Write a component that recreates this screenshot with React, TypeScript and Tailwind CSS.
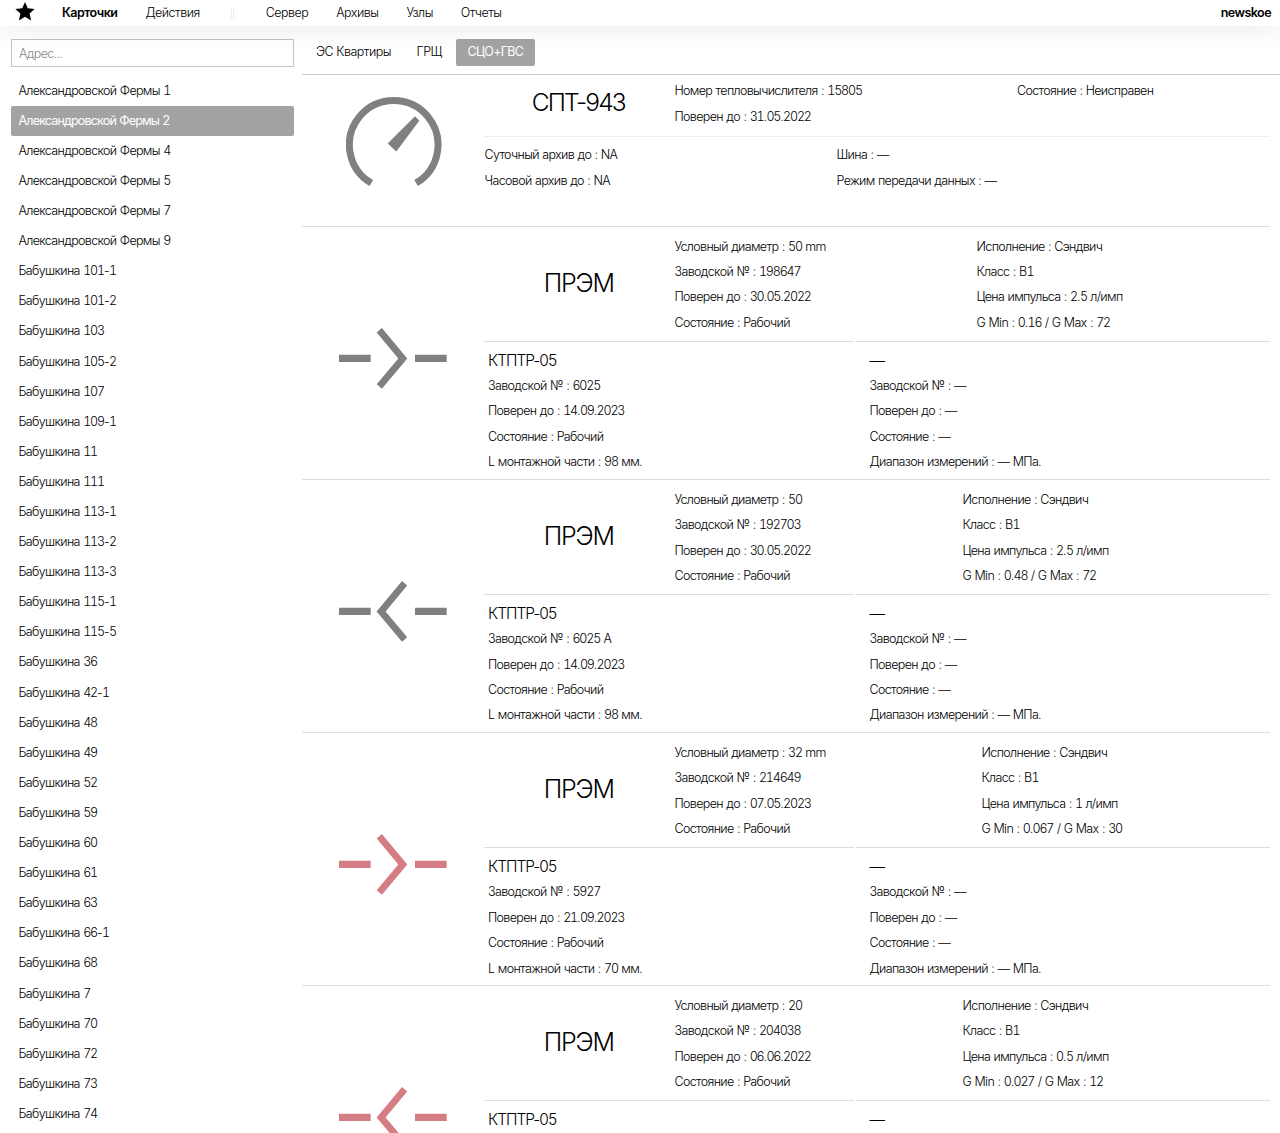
import { useState } from "react";
import clsx from "clsx";

const NAV_MAIN = ["Карточки", "Действия"];
const NAV_EXTRA = ["Сервер", "Архивы", "Узлы", "Отчеты"];
const TABS = ["ЭС Квартиры", "ГРЩ", "СЦО+ГВС"];

const ADDRESSES = [
  ...["1", "2", "4", "5", "7", "9"].map((n) => `Александровской Фермы ${n}`),
  ...[
    "101-1", "101-2", "103", "105-2", "107", "109-1", "11", "111", "113-1", "113-2",
    "113-3", "115-1", "115-5", "36", "42-1", "48", "49", "52", "59", "60", "61", "63",
    "66-1", "68", "7", "70", "72", "73", "74",
  ].map((n) => `Бабушкина ${n}`),
];

type Meter = {
  diameter: string;
  serial: string;
  verified: string;
  impulse: string;
  range: string;
  col: string;
  color: string;
  reverse: boolean;
  sensor?: { serial: string; verified: string; length: string };
};

const METERS: Meter[] = [
  {
    diameter: "50 mm", serial: "198647", verified: "30.05.2022", impulse: "2.5 л/имп",
    range: "G Min : 0.16 / G Max : 72", col: "w-[302px]", color: "text-[#808080]", reverse: false,
    sensor: { serial: "6025", verified: "14.09.2023", length: "98 мм." },
  },
  {
    diameter: "50", serial: "192703", verified: "30.05.2022", impulse: "2.5 л/имп",
    range: "G Min : 0.48 / G Max : 72", col: "w-[288px]", color: "text-[#808080]", reverse: true,
    sensor: { serial: "6025 A", verified: "14.09.2023", length: "98 мм." },
  },
  {
    diameter: "32 mm", serial: "214649", verified: "07.05.2023", impulse: "1 л/имп",
    range: "G Min : 0.067 / G Max : 30", col: "w-[307px]", color: "text-[#d57d84]", reverse: false,
    sensor: { serial: "5927", verified: "21.09.2023", length: "70 мм." },
  },
  {
    diameter: "20", serial: "204038", verified: "06.06.2022", impulse: "0.5 л/имп",
    range: "G Min : 0.027 / G Max : 12", col: "w-[288px]", color: "text-[#d57d84]", reverse: true,
  },
];

// Digits get equal widths, the rest of the text stays proportional
function Label({ text }: { text: string }) {
  return text.split(/(\d+)/).map((part, i) =>
    i % 2 ? <span key={i} className="tracking-[-0.094em] tabular-nums">{part}</span> : part
  );
}

function Star() {
  return (
    <svg className="h-[19px] w-[20px]" viewBox="0 0 20 19" fill="currentColor">
      <path d="M10 0 12.8 6.3 19.7 7 14.6 11.6 16.1 18.4 10 14.8 3.9 18.4 5.4 11.6.3 7 7.2 6.3Z" />
    </svg>
  );
}

function Gauge() {
  return (
    <svg className="h-[90px] w-[96px] text-[#808080]" viewBox="0 0 96 90">
      <path d="M25.3 86.1A44.3 44.3 0 1 1 70.1 86.1" fill="none" stroke="currentColor" strokeWidth="7" />
      <path d="M69 19.2 73.3 23.8 50.3 54.5 41.7 46.5Z" fill="currentColor" />
    </svg>
  );
}

function Flow({ reverse, color }: { reverse: boolean; color: string }) {
  return (
    <svg className={clsx("h-[62px] w-[108px]", color)} viewBox="0 0 108 62" fill="currentColor">
      <path d="M0 26.7H31.7V34.1H0ZM76 26.7H107.7V34.1H76Z" />
      <path
        d={reverse
          ? "M63 .1 37.6 30.4 63 60.7 68.2 56.2 46.6 30.4 68.2 4.6Z"
          : "M42.9.1 68.3 30.4 42.9 60.7 37.7 56.2 59.3 30.4 37.7 4.6Z"}
      />
    </svg>
  );
}

function Lines({ items, className }: { items: string[]; className?: string }) {
  return (
    <div className={clsx("shrink-0", className)}>
      {items.map((t) => (
        <p key={t} className="h-[25.45px] leading-[25.45px] whitespace-nowrap"><Label text={t} /></p>
      ))}
    </div>
  );
}

function Calculator() {
  return (
    <section className="mr-[10px] flex h-[152px] shrink-0 border-b border-[#dedede]">
      <div className="w-[182px] shrink-0 pt-[22.4px] pl-[44px]">
        <Gauge />
      </div>
      <div className="flex-1">
        <div className="flex h-[61.5px] border-b border-[#eeeeee] pt-[3.2px]">
          <h2 className="w-[188.5px] shrink-0 pt-[4.5px] text-center text-[24.5px] leading-[38px] tracking-[-0.075em]">СПТ-943</h2>
          <Lines className="ml-[2px] w-[342.5px]" items={["Номер тепловычислителя : 15805", "Поверен до : 31.05.2022"]} />
          <Lines items={["Состояние : Неисправен"]} />
        </div>
        <div className="flex pt-[5.7px] pl-[0.5px]">
          <Lines className="w-[352px]" items={["Суточный архив до : NA", "Часовой архив до : NA"]} />
          <Lines items={["Шина : —", "Режим передачи данных : —"]} />
        </div>
      </div>
    </section>
  );
}

function MeterCard({ meter }: { meter: Meter }) {
  const { sensor } = meter;
  return (
    <section className={clsx("mr-[10px] flex shrink-0", sensor && "h-[253.15px] border-b border-[#dedede]")}>
      <div className="w-[182px] shrink-0 pt-[101px] pl-[37px]">
        <Flow reverse={meter.reverse} color={meter.color} />
      </div>
      <div className="flex-1">
        <div className="flex h-[114px] pt-[6.6px]">
          <h2 className="w-[189.5px] shrink-0 pt-[30.4px] text-center text-[25px] leading-[38px] tracking-[-0.05em]">ПРЭМ</h2>
          <Lines
            className={clsx("ml-px", meter.col)}
            items={[
              `Условный диаметр : ${meter.diameter}`,
              `Заводской № : ${meter.serial}`,
              `Поверен до : ${meter.verified}`,
              "Состояние : Рабочий",
            ]}
          />
          <Lines items={["Исполнение : Сэндвич", "Класс : B1", `Цена импульса : ${meter.impulse}`, meter.range]} />
        </div>
        <div className="flex gap-[2px]">
          <div className="w-[370px] border-t border-[#dedede] pt-[5.5px] pl-1">
            <h3 className="text-[15.5px] leading-[25.5px] tracking-[-0.065em]">КТПТР-05</h3>
            {sensor && (
              <Lines
                items={[
                  `Заводской № : ${sensor.serial}`,
                  `Поверен до : ${sensor.verified}`,
                  "Состояние : Рабочий",
                  `L монтажной части : ${sensor.length}`,
                ]}
              />
            )}
          </div>
          <div className="flex-1 border-t border-[#dedede] pt-[5.5px] pl-[13.5px]">
            <h3 className="text-[15.5px] leading-[25.5px]">—</h3>
            {sensor && (
              <Lines items={["Заводской № : —", "Поверен до : —", "Состояние : —", "Диапазон измерений : — МПа."]} />
            )}
          </div>
        </div>
      </div>
    </section>
  );
}

export default function App() {
  const [address, setAddress] = useState(ADDRESSES[1]);
  const [tab, setTab] = useState(TABS[2]);

  return (
    <div className="flex h-[1133px] flex-col overflow-hidden bg-white font-['Inter','Liberation_Sans',sans-serif] text-[12.5px] font-light tracking-[-0.052em] text-black [word-spacing:0.5px]">
      <header className="relative flex h-[26px] shrink-0 items-center bg-white leading-[24px] shadow-[0_0_30px_rgba(0,0,0,0.1)]">
        <div className="w-[62px] pb-[3px] pl-[14.5px]">
          <Star />
        </div>
        <nav className="flex flex-1 items-center pb-[1px] tracking-[-0.042em]">
          {NAV_MAIN.map((t, i) => (
            <a key={t} className={clsx("mr-7", i === 0 && "font-semibold")}>{t}</a>
          ))}
          <span className="mr-[32px] ml-[3px] h-3 w-[3px] border-x border-[#eeeeee]" />
          {NAV_EXTRA.map((t) => (
            <a key={t} className="mr-7">{t}</a>
          ))}
        </nav>
        <span className="pr-[9px] pb-[1px] font-semibold tracking-[-0.042em]">newskoe</span>
      </header>

      <div className="flex min-h-0 flex-1">
        <aside className="w-[302px] shrink-0 pt-[13px] pr-[8px] pl-[11px]">
          <input
            placeholder="Адрес..."
            className="mb-[8.7px] block h-[28px] w-full border border-[#c4c4c4] bg-white px-[7px] placeholder:text-[#8a8a8a]"
          />
          <ul>
            {ADDRESSES.map((a) => (
              <li
                key={a}
                onClick={() => setAddress(a)}
                className={clsx("h-[30.1px] rounded-[2px] pl-[7.5px] leading-[29px]", a === address && "bg-[#a3a3a3] font-normal tracking-[-0.066em] text-white")}
              >
                <Label text={a} />
              </li>
            ))}
          </ul>
        </aside>

        <main className="flex min-w-0 flex-1 flex-col">
          <div className="flex h-[49px] shrink-0 border-b border-[#c8c8c8] pt-[13px] pl-[2.5px] tracking-[-0.04em]">
            {TABS.map((t) => (
              <button
                key={t}
                onClick={() => setTab(t)}
                className={clsx("mr-[2.5px] flex h-[27px] rounded-[2px] px-[11.5px] leading-[25px]", t === tab && "bg-[#a3a3a3] font-normal tracking-[-0.055em] text-white")}
              >
                {t}
              </button>
            ))}
          </div>
          <Calculator />
          {METERS.map((m) => (
            <MeterCard key={m.serial} meter={m} />
          ))}
        </main>
      </div>
    </div>
  );
}
